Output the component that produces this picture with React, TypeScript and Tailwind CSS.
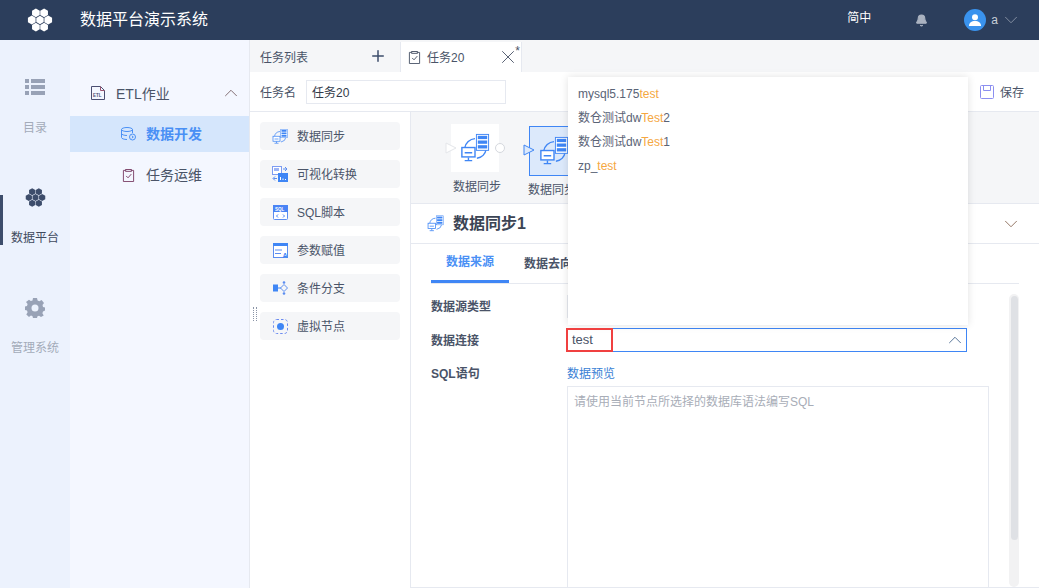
import { ChevronDown, ChevronUp, Plus, X, Bell } from 'lucide-react';

const FONT = 'font-["Liberation_Sans","Noto_Sans_CJK_SC",sans-serif]';

// cube-flower logo, used in the header and the rail
function Logo({ color, size }: { color: string; size: number }) {
  const angles = [0, 60, 120, 180, 240, 300];
  return (
    <svg width={size} height={size} viewBox="0 0 24 24">
      {angles.map((a) => (
        <path key={a} d="M19.600 7.900l3.550 2.050v4.100L19.600 16.100l-3.550-2.050v-4.100z" fill={color} transform={`rotate(${a} 12 12)`} />
      ))}
      <path d="M12 8.100l3.400 1.950v3.900L12 15.900l-3.400-1.950v-3.900z" fill={color} />
    </svg>
  );
}

function ListIcon() {
  return (
    <svg width="20" height="16" viewBox="0 0 20 16" fill="#98a2b6">
      <rect x="0" y="0" width="4" height="4" />
      <rect x="6" y="0" width="14" height="4" />
      <rect x="0" y="6" width="4" height="4" />
      <rect x="6" y="6" width="14" height="4" />
      <rect x="0" y="12" width="4" height="4" />
      <rect x="6" y="12" width="14" height="4" />
    </svg>
  );
}

function GearIcon() {
  return (
    <svg width="20" height="20" viewBox="0 0 20 20" fill="none">
      <path
        d="M8 0h4l.6 2.600 1.700.7L16.600 2 19 5l-1.500 2.100.5 1.800 2 .6v3l-2 1-.6 1.700 1.300 2.200L16 19l-2-1.300-1.500.6L12 20H8l-.6-2-1.500-.6L4 19l-2.700-2.500 1.300-2.200L2 12.600 0 12V8.500l2-.6.600-1.800L1 4l3-2.300 1.800 1.400L7.500 2.400z"
        fill="#98a2b6"
      />
      <circle cx="10" cy="10" r="3.500" fill="#ecf2fd" />
    </svg>
  );
}

// database-sync glyph, also used small in the palette and panel header
function SyncIcon({ size }: { size: number }) {
  return (
    <svg width={size} height={size} viewBox="0 0 32 32" fill="none">
      <path d="M5 16a12 12 0 0 1 11-10" stroke="#3f86f5" strokeWidth="1.500" />
      <path d="M28 17a12 12 0 0 1-10 10" stroke="#3f86f5" strokeWidth="1.500" />
      <rect x="17.500" y="1.500" width="13" height="17" fill="#fff" stroke="#3f86f5" />
      <rect x="19" y="3" width="10" height="3.500" fill="#3f86f5" />
      <rect x="19" y="8" width="10" height="3.500" fill="#3f86f5" />
      <rect x="19" y="13" width="10" height="3.500" fill="#3f86f5" />
      <rect x="2" y="15.500" width="14" height="10" fill="#fff" stroke="#3f86f5" strokeWidth="1.500" />
      <path d="M5 21h8M9 26v3M5 29.500h8" stroke="#3f86f5" strokeWidth="1.500" />
    </svg>
  );
}

function EtlIcon() {
  return (
    <svg width="14" height="14" viewBox="0 0 14 14" fill="none">
      <path d="M.5.500h9l4 4v9H.5z" stroke="#4b4f72" />
      <path d="M9.500.500v4h4" stroke="#9a5470" />
      <text x="2" y="10.500" fontSize="4.500" fontWeight="700" fill="#4b4f72" fontFamily="Liberation Sans">ETL</text>
    </svg>
  );
}

function DbIcon() {
  return (
    <svg width="15" height="14" viewBox="0 0 15 14" fill="none" stroke="#4a90f5" strokeWidth="1">
      <ellipse cx="6" cy="2.500" rx="5.500" ry="2" />
      <path d="M.5 2.500v8c0 1.100 2.500 2 5.500 2M11.500 2.500V6M.5 6.500c0 1.100 2.500 2 5.500 2" />
      <circle cx="11.500" cy="10" r="3" />
      <path d="M10.800 8.800l1.500 1.200-1.500 1.200" />
    </svg>
  );
}

function ClipIcon({ size, stroke }: { size: number; stroke: string }) {
  return (
    <svg width={size} height={size} viewBox="0 0 14 14" fill="none" stroke={stroke} strokeWidth="1">
      <path d="M4 1.500H1.500v12h11v-12H10" />
      <rect x="4" y=".5" width="6" height="2" />
      <path d="M4.500 7.500l2 2 3.500-4" />
    </svg>
  );
}

function VisualIcon() {
  return (
    <svg width="16" height="16" viewBox="0 0 16 16">
      <rect x=".5" y=".5" width="9" height="8" fill="#fff" stroke="#7d9cf2" />
      <rect x="2" y="2" width="5" height="3" fill="#9db4f5" />
      <rect x="6" y="7" width="10" height="9" fill="#3f86f5" />
      <path d="M8.500 14v-3M11 14v-1.500M13.500 14v-1" stroke="#fff" />
      <path d="M11 3h3.500M13 1l2 2-2 2M5 12.500H1.500M3 10.500l-2 2 2 2" stroke="#5b8df0" fill="none" />
    </svg>
  );
}

function SqlIcon() {
  return (
    <svg width="15" height="15" viewBox="0 0 15 15">
      <rect x=".5" y=".5" width="14" height="14" rx="1" fill="#fff" stroke="#5b8df0" />
      <rect x="0" y="0" width="15" height="7" fill="#4a84f5" />
      <text x="2" y="5.500" fontSize="4.500" fontWeight="700" fill="#fff" fontFamily="Liberation Sans">SQL</text>
      <path d="M5 9.500L3.500 11 5 12.500M10 9.500l1.500 1.500-1.500 1.500" stroke="#4a84f5" fill="none" />
    </svg>
  );
}

function ParamIcon() {
  return (
    <svg width="15" height="15" viewBox="0 0 15 15">
      <rect x=".5" y=".5" width="14" height="14" fill="#fff" stroke="#5b8df0" />
      <rect x="0" y="0" width="15" height="3" fill="#3f86f5" />
      <path d="M2 7h7M2 10.500h6" stroke="#5b8df0" />
      <text x="9.500" y="14.500" fontSize="7" fontWeight="700" fill="#3f86f5" fontFamily="Liberation Sans">A</text>
    </svg>
  );
}

function BranchIcon() {
  return (
    <svg width="15" height="14" viewBox="0 0 15 14" fill="none">
      <rect x="0" y="3.500" width="5" height="7" fill="#3f86f5" />
      <path d="M5 7h3" stroke="#3f86f5" />
      <path d="M11 3.500L14.500 7 11 10.500 7.500 7z" stroke="#5b8df0" />
      <circle cx="11" cy="1.500" r="1.300" fill="#5b8df0" />
      <circle cx="11" cy="12.500" r="1.300" fill="#5b8df0" />
    </svg>
  );
}

function VirtualIcon() {
  return (
    <svg width="15" height="15" viewBox="0 0 15 15" fill="none">
      <rect x=".5" y=".5" width="14" height="14" rx="3" stroke="#6d8cf0" strokeDasharray="2.500 2" />
      <circle cx="7.500" cy="7.500" r="3.500" fill="#3f86f5" />
    </svg>
  );
}

const palette = [
  { name: '数据同步', icon: <SyncIcon size={17} /> },
  { name: '可视化转换', icon: <VisualIcon /> },
  { name: 'SQL脚本', icon: <SqlIcon /> },
  { name: '参数赋值', icon: <ParamIcon /> },
  { name: '条件分支', icon: <BranchIcon /> },
  { name: '虚拟节点', icon: <VirtualIcon /> },
];

export default function App() {
  return (
    <div className={`${FONT} relative flex h-[588px] w-[1039px] flex-col overflow-hidden bg-white text-[13px] text-[#4a5468]`}>
      {/* top bar */}
      <header className="flex h-10 shrink-0 items-center bg-[#2c3e5c] text-white">
        <div className="flex w-[80px] justify-center">
          <Logo color="#ffffff" size={26} />
        </div>
        <div className="text-base">数据平台演示系统</div>
        <div className="ml-auto flex items-center">
          <span className="mb-1 text-xs">简中</span>
          <Bell className="ml-[44px] h-[13px] w-[13px] fill-[#aab2c0] text-[#aab2c0]" />
          <span className="ml-[36px] flex h-[22px] w-[22px] items-center justify-center rounded-full bg-[#3a93ee]">
            <svg width="12" height="12" viewBox="0 0 12 12" fill="#fff">
              <circle cx="6" cy="3.200" r="3" />
              <path d="M0 12c0-3.500 2.500-5 6-5s6 1.500 6 5z" />
            </svg>
          </span>
          <span className="ml-[5px] text-xs text-[#c8ced8]">a</span>
          <ChevronDown className="mr-[17px] ml-[2px] h-[22px] w-[22px] text-[#8b95a7]" strokeWidth={1} />
        </div>
      </header>

      <div className="flex min-h-0 flex-1">
        {/* icon rail */}
        <nav className="relative flex w-[70px] shrink-0 flex-col items-center bg-[#ecf2fd] pt-[39px] text-xs text-[#a3abb9]">
          <ListIcon />
          <span className="mt-[25px]">目录</span>
          <span className="mt-[51px]">
            <Logo color="#3d4d6b" size={21} />
          </span>
          <span className="mt-[22px] text-[#3f4a5e]">数据平台</span>
          <span className="mt-[52px]">
            <GearIcon />
          </span>
          <span className="mt-[22px]">管理系统</span>
          <span className="absolute top-[155px] left-0 h-[50px] w-[3px] bg-[#3d4d6b]" />
        </nav>

        {/* tree */}
        <aside className="w-[180px] shrink-0 border-r border-[#e6e9f0] bg-[#f4f7ff] pt-[38px] text-sm">
          <div className="flex h-[30px] items-center pr-[7px] pl-[21px]">
            <EtlIcon />
            <span className="ml-[11px] pt-[1px]">ETL作业</span>
            <ChevronUp className="ml-auto h-[22px] w-[22px] text-[#7a6468]" strokeWidth={1} />
          </div>
          <div className="mt-[8px] flex h-9 items-center bg-[#d5e6fc] pl-[51px] font-bold text-[#4a90f5]">
            <DbIcon />
            <span className="ml-[10px]">数据开发</span>
          </div>
          <div className="mt-[5px] flex h-9 items-center pl-[52px]">
            <ClipIcon size={13} stroke="#7a3f66" />
            <span className="ml-[11px]">任务运维</span>
          </div>
        </aside>

        {/* workspace */}
        <main className="flex min-w-0 flex-1 flex-col">
          <div className="flex h-[32px] shrink-0 items-stretch bg-[#f5f6f8] text-xs">
            <div className="flex w-[150px] items-center pr-[13px] pl-[10px]">
              <span className="pt-[3px]">任务列表</span>
              <Plus className="ml-auto h-[18px] w-[18px] text-[#3d4d6b]" strokeWidth={2} />
            </div>
            <div className="relative mt-[2px] flex w-[122px] items-center border-x border-[#e6e9f0] bg-white pr-[2px] pl-[7px]">
              <ClipIcon size={13} stroke="#4a5468" />
              <span className="ml-[6px] pt-[2px]">任务20</span>
              <X className="ml-auto h-[22px] w-[22px]" strokeWidth={1} />
              <span className="absolute top-[3px] right-[1px] text-xs leading-3">*</span>
            </div>
          </div>

          <div className="flex h-[40px] shrink-0 items-center border-b border-[#e6e9f0] pr-[15px] pl-[10px] text-xs">
            <span className="pt-[2px]">任务名</span>
            <div className="ml-[10px] flex h-6 w-[200px] items-center border border-[#e6e9f0] pt-[2px] pl-[5px] text-[#333b4a]">任务20</div>
            <span className="ml-auto flex items-center">
              <svg width="14" height="14" viewBox="0 0 14 14" fill="none" stroke="#8c8ff0">
                <rect x=".5" y=".5" width="13" height="13" rx="1" />
                <path d="M3.500 .5v5h7v-5" />
              </svg>
              <span className="ml-[6px] pt-[2px]">保存</span>
            </span>
          </div>

          <div className="flex min-h-0 flex-1">
            {/* node palette */}
            <div className="relative flex w-[160px] shrink-0 flex-col gap-[10px] px-[10px] pt-[10px] text-xs">
              {palette.map((p) => (
                <div key={p.name} className="flex h-[28px] items-center rounded-sm bg-[#f5f6f8] pl-[12px]">
                  <span className="flex w-[16px] justify-center">{p.icon}</span>
                  <span className="ml-[9px] pt-[2px]">{p.name}</span>
                </div>
              ))}
              <span className="absolute top-[195px] left-[3px] h-[14px] w-[4px] border-x border-dotted border-[#8b95a7]" />
            </div>

            {/* canvas + config */}
            <div className="flex min-w-0 flex-1 flex-col border-l border-[#e6e9f0]">
              <div className="relative h-[91px] shrink-0 bg-[#f5f6f8] text-xs">
                <div className="absolute top-[12px] left-[40px] flex h-[48px] w-[48px] items-center justify-center bg-white">
                  <SyncIcon size={30} />
                </div>
                <svg className="absolute top-[30px] left-[34px]" width="12" height="12" viewBox="0 0 12 12">
                  <path d="M1 1l10 5-10 5z" fill="#fff" stroke="#e4e6ea" />
                </svg>
                <span className="absolute top-[31px] left-[84px] h-[10px] w-[10px] rounded-full border border-[#d5d8de] bg-white" />
                <span className="absolute top-[67px] left-[42px]">数据同步</span>
                <div className="absolute top-[14px] left-[118px] flex h-[50px] w-[50px] items-center justify-center border border-[#3f86f5] bg-[#dce9fb]">
                  <SyncIcon size={30} />
                </div>
                <svg className="absolute top-[32px] left-[112px]" width="12" height="12" viewBox="0 0 12 12">
                  <path d="M1 1l10 5-10 5z" fill="#dce9fb" stroke="#3f86f5" />
                </svg>
                <span className="absolute top-[70px] left-[117px]">数据同步1</span>
              </div>

              <div className="flex h-[41px] shrink-0 items-center border-y border-[#e6e9f0] pr-[17px] pl-[16px]">
                <SyncIcon size={17} />
                <span className="ml-[9px] pt-[1px] text-base font-bold text-[#3b4454]">数据同步1</span>
                <ChevronDown className="ml-auto h-[22px] w-[22px] text-[#8a6a58]" strokeWidth={1} />
              </div>

              <div className="relative flex min-h-0 flex-1 overflow-hidden border-b border-[#e6e9f0] pr-[20px] pl-[20px]">
                <div className="flex min-w-0 flex-1 flex-col">
                  <div className="flex h-[40px] shrink-0 border-b border-[#e6e9f0] text-xs font-bold">
                    <div className="flex w-[78px] items-center justify-center border-b-[3px] border-[#3f86f5] text-[#4a90f5]">数据来源</div>
                    <div className="ml-[15px] flex items-center">数据去向</div>
                  </div>

                  <div className="mt-[11px] flex h-[23px] shrink-0 items-center text-xs font-bold">
                    <span className="w-[136px]">数据源类型</span>
                    <div className="h-full w-[400px] border border-[#e6e9f0]" />
                  </div>
                  <div className="mt-[10px] flex h-[24px] shrink-0 items-center text-xs font-bold">
                    <span className="w-[136px] pt-[2px]">数据连接</span>
                    <div className="flex h-full w-[400px] items-center border border-[#3f86f5] pl-[4px] text-[13px] font-normal text-[#4a5468]">
                      <span>test</span>
                      <ChevronUp className="ml-auto h-[22px] w-[22px] text-[#4a6a90]" strokeWidth={1} />
                    </div>
                  </div>
                  <div className="mt-[14px] flex shrink-0 text-xs font-bold">
                    <span className="w-[136px]">SQL语句</span>
                    <span className="font-normal text-[#3a7fd5]">数据预览</span>
                  </div>
                  <div className="mt-[4px] ml-[136px] h-[220px] w-[422px] shrink-0 border border-[#e6e9f0] px-[6px] py-[7px] text-xs text-[#a8adb7]">
                    请使用当前节点所选择的数据库语法编写SQL
                  </div>
                </div>
                <div className="absolute top-[50px] right-[20px] h-[293px] w-[10px] rounded-full bg-[#f2f2f3]">
                  <div className="mx-auto mt-[2px] h-[244px] w-[7px] rounded-full bg-[#dfe1e5]" />
                </div>
              </div>
            </div>
          </div>
        </main>
      </div>

      {/* connection dropdown */}
      <div className="absolute top-[77px] left-[568px] h-[248px] w-[400px] bg-white pt-[5px] text-xs text-[#5a6376] shadow-[0_0_8px_rgba(0,0,0,0.12)]">
        <div className="flex h-6 items-center pl-[10px]">mysql5.175<span className="text-[#f5a742]">test</span></div>
        <div className="flex h-6 items-center pl-[10px]">数仓测试dw<span className="text-[#f5a742]">Test</span>2</div>
        <div className="flex h-6 items-center pl-[10px]">数仓测试dw<span className="text-[#f5a742]">Test</span>1</div>
        <div className="flex h-6 items-center pl-[10px]">zp_<span className="text-[#f5a742]">test</span></div>
      </div>

      {/* red annotation box */}
      <div className="absolute top-[328px] left-[566px] h-[24px] w-[47px] border-2 border-[#f04040]" />
    </div>
  );
}
